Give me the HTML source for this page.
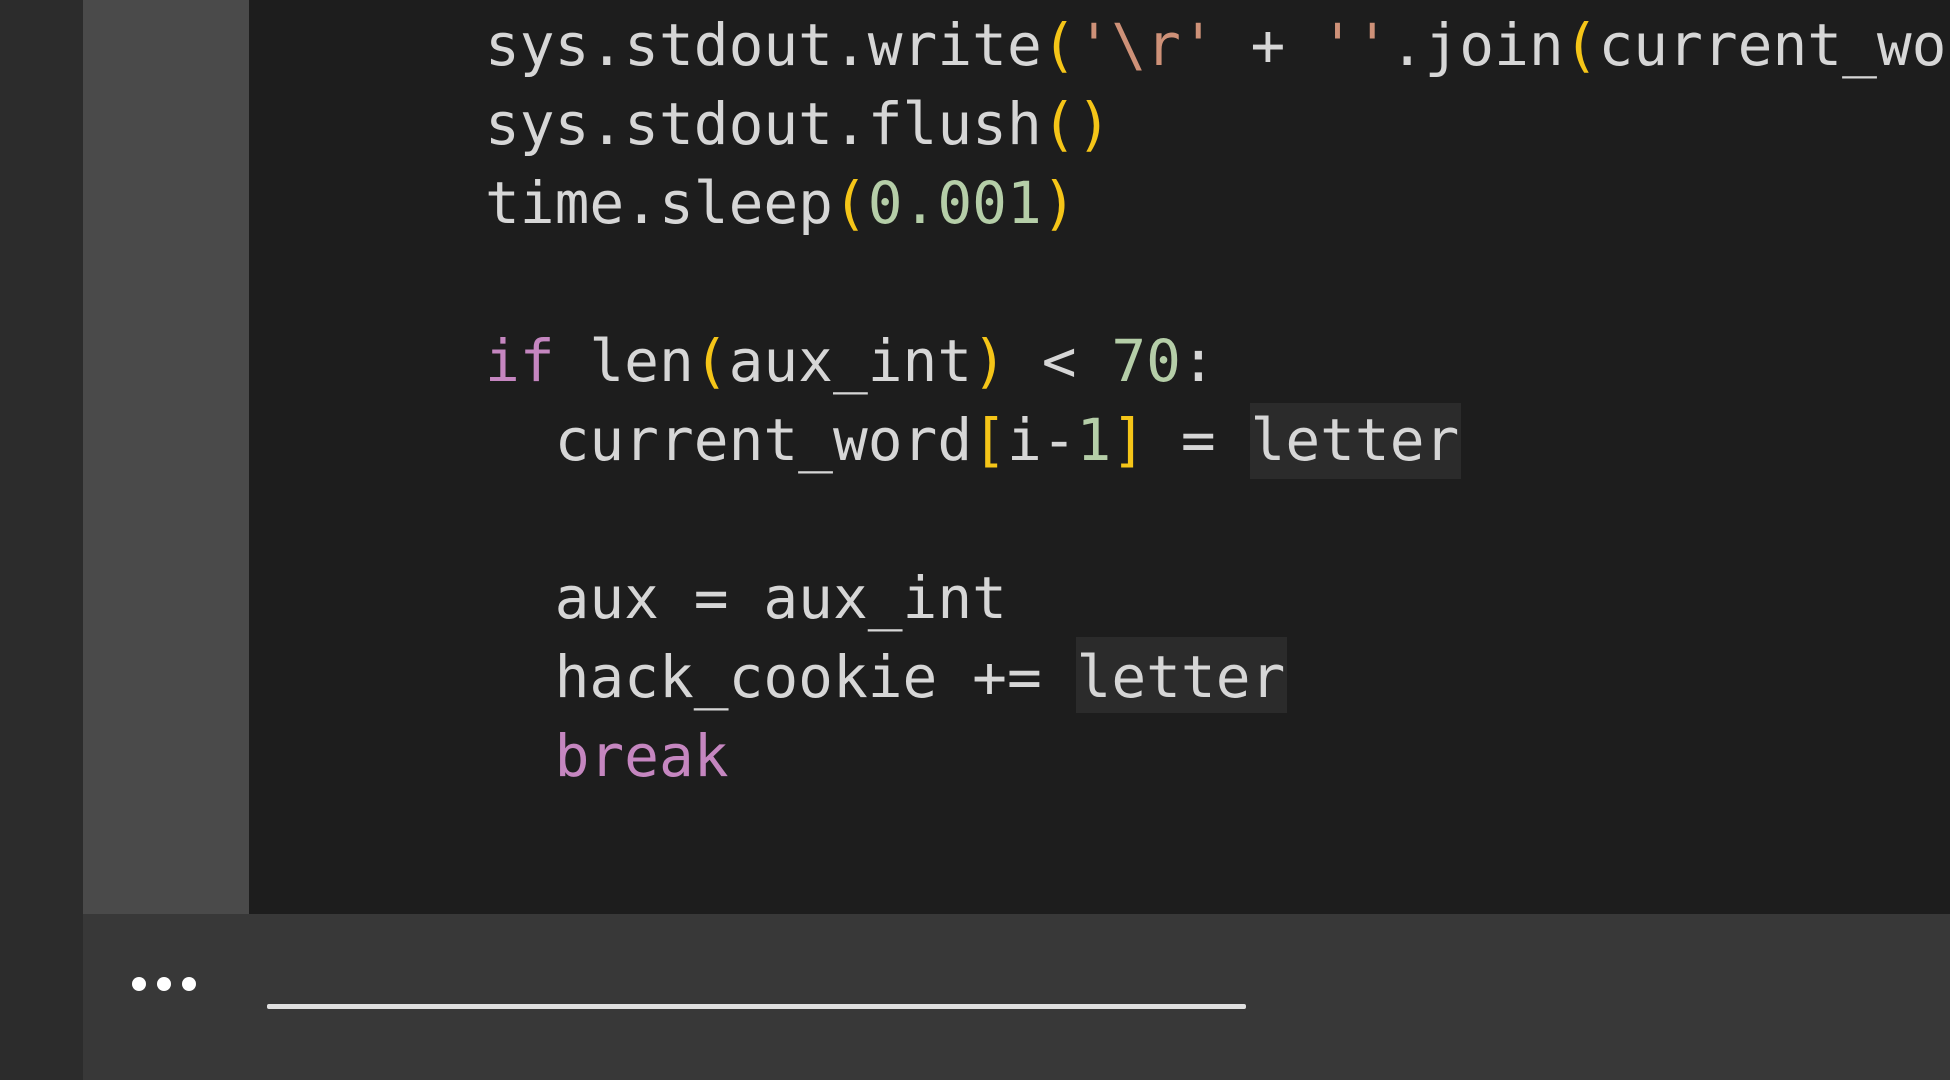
<!DOCTYPE html>
<html><head><meta charset="utf-8"><style>
body{margin:0;width:1950px;height:1080px;overflow:hidden;background:#2c2c2c;position:relative}
.strip{position:absolute;left:0;top:0;width:83px;height:1080px;background:#2c2c2c}
.gut{position:absolute;left:83px;top:0;width:166px;height:914px;background:#4a4a4a}
.code{position:absolute;left:249px;top:0;width:1701px;height:914px;background:#1d1d1d;overflow:hidden}
.bar{position:absolute;left:83px;top:914px;width:1867px;height:166px;background:#383838}
.l{position:absolute;left:236px;white-space:pre;font-family:"DejaVu Sans Mono","Liberation Mono",monospace;font-size:57.8px;line-height:78px;color:#d6d6d6}
.p{color:#f5c518}.s{color:#ce9178}.n{color:#b5cea8}.k{color:#c586c0}
.hl{position:absolute;background:#2b2b2b}
.dot{position:absolute;top:977px;width:14px;height:14px;border-radius:50%;background:#fff}
.line{position:absolute;left:267px;top:1004px;width:979px;height:5px;background:#e0e0e0;border-radius:2px}
</style></head><body>
<div class="strip"></div><div class="gut"></div>
<div class="code">
<div class="hl" style="left:1001px;top:403px;width:211px;height:76px"></div>
<div class="hl" style="left:827px;top:637px;width:211px;height:76px"></div>
<div class="l" style="top:6px">sys.stdout.write<span class="p">(</span><span class="s">'\r'</span> + <span class="s">''</span>.join<span class="p">(</span>current_word<span class="p">))</span></div>
<div class="l" style="top:85px">sys.stdout.flush<span class="p">()</span></div>
<div class="l" style="top:164px">time.sleep<span class="p">(</span><span class="n">0.001</span><span class="p">)</span></div>
<div class="l" style="top:322px"><span class="k">if</span> len<span class="p">(</span>aux_int<span class="p">)</span> &lt; <span class="n">70</span>:</div>
<div class="l" style="top:401px">  current_word<span class="p">[</span>i-<span class="n">1</span><span class="p">]</span> = letter</div>
<div class="l" style="top:559px">  aux = aux_int</div>
<div class="l" style="top:638px">  hack_cookie += letter</div>
<div class="l" style="top:717px">  <span class="k">break</span></div>
</div>
<div class="bar"></div>
<div class="dot" style="left:132px"></div><div class="dot" style="left:157px"></div><div class="dot" style="left:182px"></div>
<div class="line"></div>
</body></html>
